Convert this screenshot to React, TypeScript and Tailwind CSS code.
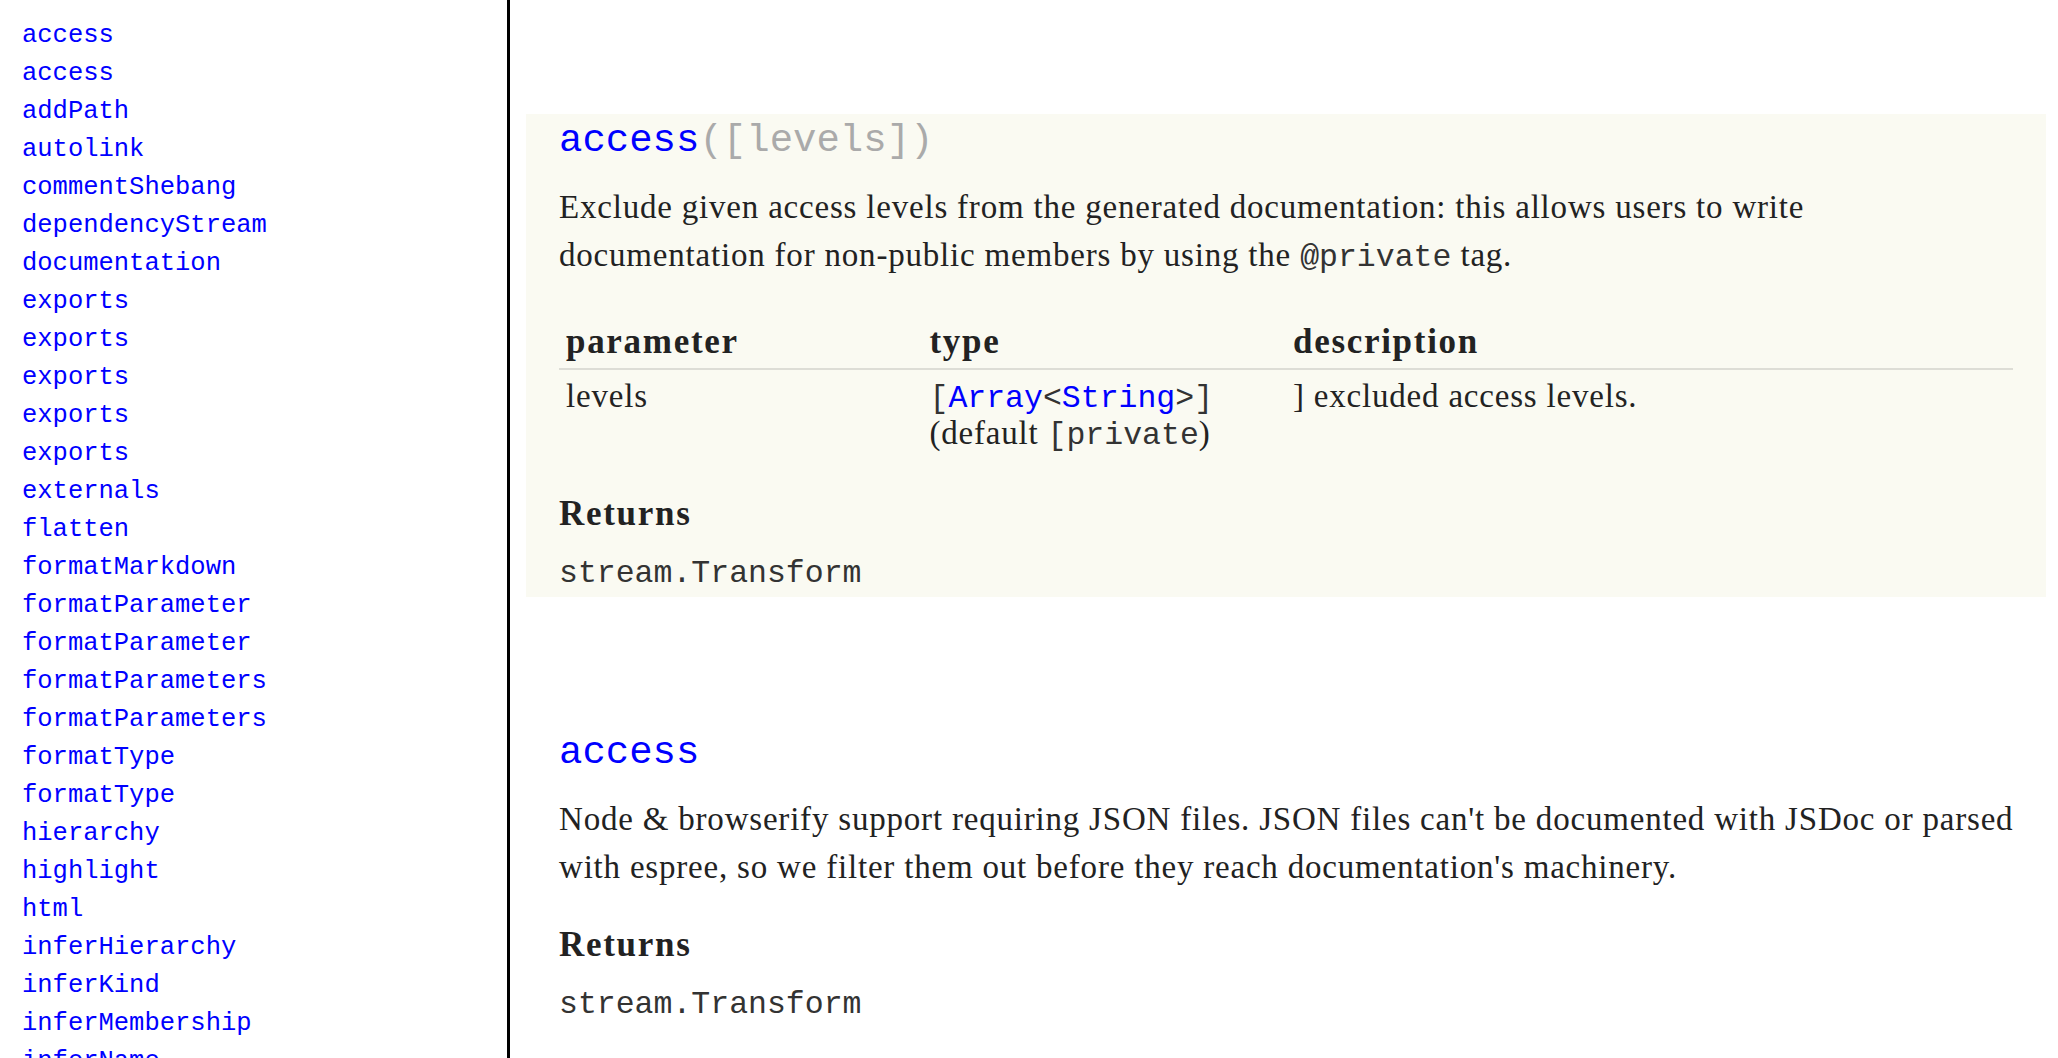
import React from 'react'

const NAV_ITEMS = [
  'access',
  'access',
  'addPath',
  'autolink',
  'commentShebang',
  'dependencyStream',
  'documentation',
  'exports',
  'exports',
  'exports',
  'exports',
  'exports',
  'externals',
  'flatten',
  'formatMarkdown',
  'formatParameter',
  'formatParameter',
  'formatParameters',
  'formatParameters',
  'formatType',
  'formatType',
  'hierarchy',
  'highlight',
  'html',
  'inferHierarchy',
  'inferKind',
  'inferMembership',
  'inferName',
  'inferParams',
  'inferProperties',
]

const MONO = "font-['Liberation_Mono',monospace]"
const SERIF = "font-['Liberation_Serif',serif]"

// Body copy is Liberation Serif stretched a little to sit on Georgia's widths.
const BODY = 'text-[33px] tracking-[0.8px]'
const HEAD = 'text-[35px] font-bold tracking-[1.7px]'
const CODE = `${MONO} text-[31.5px] leading-none tracking-normal text-[#333]`

function Sidebar() {
  return (
    <nav className="h-full w-[510px] shrink-0 overflow-hidden border-r-[3px] border-black pl-[22px] pt-[17px]">
      <ul className={`${MONO} text-[25.5px] leading-[38px]`}>
        {NAV_ITEMS.map((name, i) => (
          <li key={i}>
            <a href="#" className="text-[#0000ff]">
              {name}
            </a>
          </li>
        ))}
      </ul>
    </nav>
  )
}

function Returns({ type }: { type: string }) {
  return (
    <>
      <h3 className={`${HEAD} mt-[30px] leading-[48px]`}>Returns</h3>
      <code className={`${CODE} mt-[16px] block !leading-[40px]`}>{type}</code>
    </>
  )
}

function AccessLevels() {
  return (
    <section className="bg-[#fafaf2] px-[33px] pb-[3px] pt-px">
      <h2 className={`${MONO} text-[39px] leading-[52px]`}>
        <span className="text-[#0000ff]">access</span>
        <span className="text-[#aaa]">([levels])</span>
      </h2>
      <p className={`${BODY} mt-[16px] whitespace-nowrap leading-[48px]`}>
        Exclude given access levels from the generated documentation: this
        allows users to write
        <br />
        documentation for non-public members by using the{' '}
        <code className={CODE}>@private</code> tag.
      </p>

      <table
        className={`${BODY} mt-[36px] w-full table-fixed border-collapse leading-[37px]`}
      >
        <colgroup>
          <col className="w-1/4" />
          <col className="w-1/4" />
          <col className="w-1/2" />
        </colgroup>
        <thead>
          <tr className="border-b-2 border-[#ddddd6]">
            <th className={`${HEAD} px-[7px] py-[8px] text-left`}>parameter</th>
            <th className={`${HEAD} px-[7px] py-[8px] text-left`}>type</th>
            <th className={`${HEAD} px-[7px] py-[8px] text-left`}>
              description
            </th>
          </tr>
        </thead>
        <tbody>
          <tr className="align-top">
            <td className="px-[7px] py-[8px]">levels</td>
            <td className="whitespace-nowrap px-[7px] py-[8px]">
              <code className={CODE}>
                [<a href="#" className="text-[#0000ff]">Array</a>&lt;
                <a href="#" className="text-[#0000ff]">String</a>&gt;]
              </code>
              <br />
              (default <code className={CODE}>[private</code>)
            </td>
            <td className="px-[7px] py-[8px]">] excluded access levels.</td>
          </tr>
        </tbody>
      </table>

      <Returns type="stream.Transform" />
    </section>
  )
}

function AccessJson() {
  return (
    <section className="mt-[129px] px-[33px] pt-px">
      <h2 className={`${MONO} text-[39px] leading-[52px]`}>
        <a href="#" className="text-[#0000ff]">
          access
        </a>
      </h2>
      <p className={`${BODY} mt-[16px] whitespace-nowrap leading-[48px]`}>
        Node &amp; browserify support requiring JSON files. JSON files can't be
        documented with JSDoc or parsed
        <br />
        with espree, so we filter them out before they reach documentation's
        machinery.
      </p>
      <Returns type="stream.Transform" />
    </section>
  )
}

export default function App() {
  return (
    <div
      className={`${SERIF} flex h-[1058px] overflow-hidden bg-white text-[#222]`}
    >
      <Sidebar />
      <main className="min-w-0 flex-1 pl-[16px] pr-[12px] pt-[114px]">
        <AccessLevels />
        <AccessJson />
      </main>
    </div>
  )
}
